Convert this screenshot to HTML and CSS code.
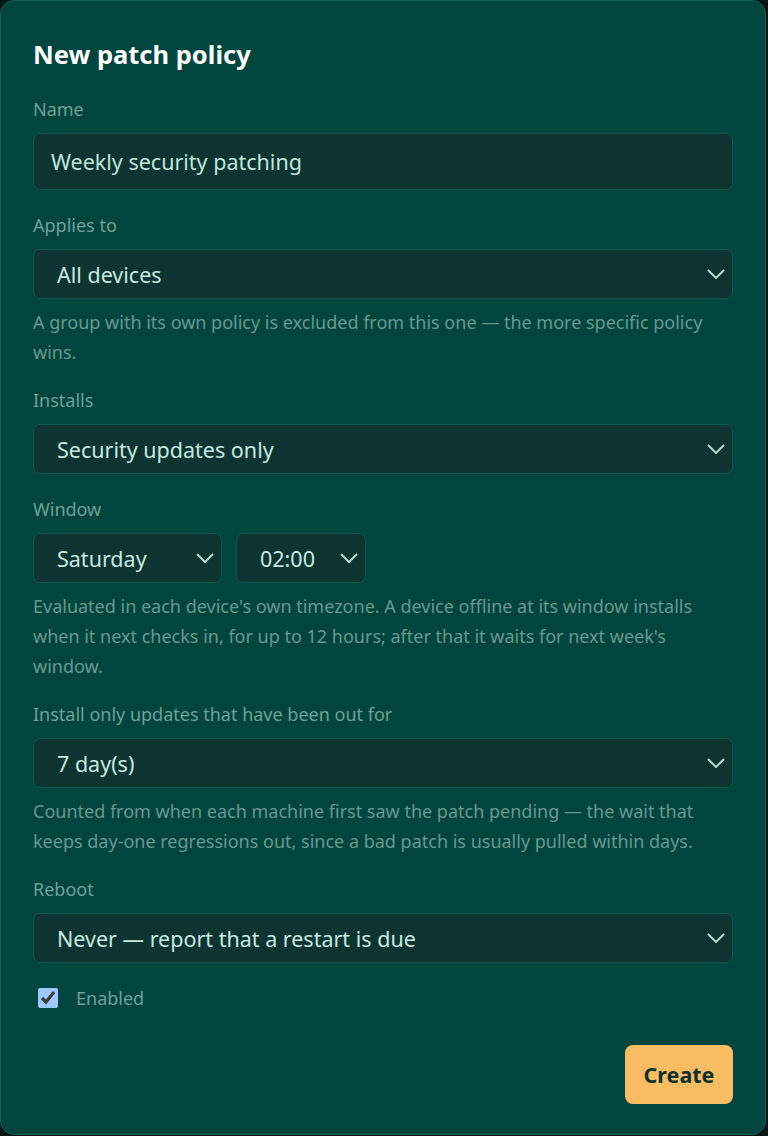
FILE: index.html
```html
<!DOCTYPE html>
<html lang="en">
<head>
    <meta charset="UTF-8">
    <meta name="viewport" content="width=device-width, initial-scale=1.0">
    <title>New patch policy</title>
    <link rel="stylesheet" href="styles.css">
</head>
<body>
    <div class="dialog">
        <h2 class="dialog-title">New patch policy</h2>

        <div class="field">
            <label class="field-label">Name</label>
            <div class="text-input">Weekly security patching</div>
        </div>

        <div class="field">
            <label class="field-label">Applies to</label>
            <div class="select">
                <span>All devices</span>
                <svg class="chevron" viewBox="0 0 18 10"><path d="M1 1l8 8 8-8"/></svg>
            </div>
            <p class="hint">A group with its own policy is excluded from this one — the more specific policy wins.</p>
        </div>

        <div class="field">
            <label class="field-label">Installs</label>
            <div class="select">
                <span>Security updates only</span>
                <svg class="chevron" viewBox="0 0 18 10"><path d="M1 1l8 8 8-8"/></svg>
            </div>
        </div>

        <div class="field">
            <label class="field-label">Window</label>
            <div class="select-row">
                <div class="select select-day">
                    <span>Saturday</span>
                    <svg class="chevron" viewBox="0 0 18 10"><path d="M1 1l8 8 8-8"/></svg>
                </div>
                <div class="select select-time">
                    <span>02:00</span>
                    <svg class="chevron" viewBox="0 0 18 10"><path d="M1 1l8 8 8-8"/></svg>
                </div>
            </div>
            <p class="hint">Evaluated in each device's own timezone. A device offline at its window installs when it next checks in, for up to 12 hours; after that it waits for next week's window.</p>
        </div>

        <div class="field">
            <label class="field-label">Install only updates that have been out for</label>
            <div class="select">
                <span>7 day(s)</span>
                <svg class="chevron" viewBox="0 0 18 10"><path d="M1 1l8 8 8-8"/></svg>
            </div>
            <p class="hint">Counted from when each machine first saw the patch pending — the wait that keeps day-one regressions out, since a bad patch is usually pulled within days.</p>
        </div>

        <div class="field">
            <label class="field-label">Reboot</label>
            <div class="select">
                <span>Never — report that a restart is due</span>
                <svg class="chevron" viewBox="0 0 18 10"><path d="M1 1l8 8 8-8"/></svg>
            </div>
        </div>

        <label class="check">
            <input type="checkbox" checked>
            <span>Enabled</span>
        </label>

        <div class="actions">
            <button class="btn-create">Create</button>
        </div>
    </div>
</body>
</html>
```

FILE: styles.css
```css
* {
    margin: 0;
    padding: 0;
    box-sizing: border-box;
}

body {
    font-family: 'Noto Sans', 'Open Sans', sans-serif;
    background: #0a1615;
    width: 768px;
    height: 1136px;
    overflow: hidden;
}

.dialog {
    width: 766px;
    height: 1135px;
    background: #00463f;
    border: 1px solid #0f6057;
    border-radius: 14px;
    padding: 37px 32px 30px;
    display: flex;
    flex-direction: column;
}

.dialog-title {
    color: #ffffff;
    font-size: 25.5px;
    font-weight: 700;
    line-height: 32px;
    margin-bottom: 26px;
}

.field {
    display: flex;
    flex-direction: column;
    margin-bottom: 22px;
}

.field-label {
    color: #72a097;
    font-size: 18px;
    line-height: 26px;
    margin-bottom: 11px;
}

.text-input {
    background: #0e3432;
    border: 1px solid #0c5850;
    border-radius: 7px;
    height: 57px;
    padding: 0 17px;
    display: flex;
    align-items: center;
    color: #bfe6dc;
    font-size: 21.5px;
}

.select {
    background: #0e3432;
    border: 1px solid #0c5850;
    border-radius: 7px;
    height: 50px;
    padding: 0 7px 0 23px;
    display: flex;
    align-items: center;
    justify-content: space-between;
    color: #c5ebe1;
    font-size: 21.5px;
}

.chevron {
    width: 18px;
    height: 10px;
    fill: none;
    stroke: #b3d8cf;
    stroke-width: 2;
}

.select-row {
    display: flex;
    gap: 14px;
}

.select-day {
    width: 189px;
}

.select-time {
    width: 130px;
}

.hint {
    color: #6b978f;
    font-size: 18px;
    line-height: 30px;
    margin-top: 8px;
    margin-bottom: -2px;
}

.check {
    display: flex;
    align-items: center;
    gap: 18px;
    height: 26px;
    padding-left: 5px;
    color: #72a097;
    font-size: 18px;
}

.check input {
    width: 20px;
    height: 20px;
    accent-color: #9cc9ff;
    margin: 0;
}

.actions {
    margin-top: auto;
    display: flex;
    justify-content: flex-end;
}

.btn-create {
    background: #f8bd62;
    color: #10302c;
    border: none;
    border-radius: 8px;
    width: 108px;
    height: 59px;
    font-family: inherit;
    font-size: 21.5px;
    font-weight: 700;
    cursor: pointer;
}
```
